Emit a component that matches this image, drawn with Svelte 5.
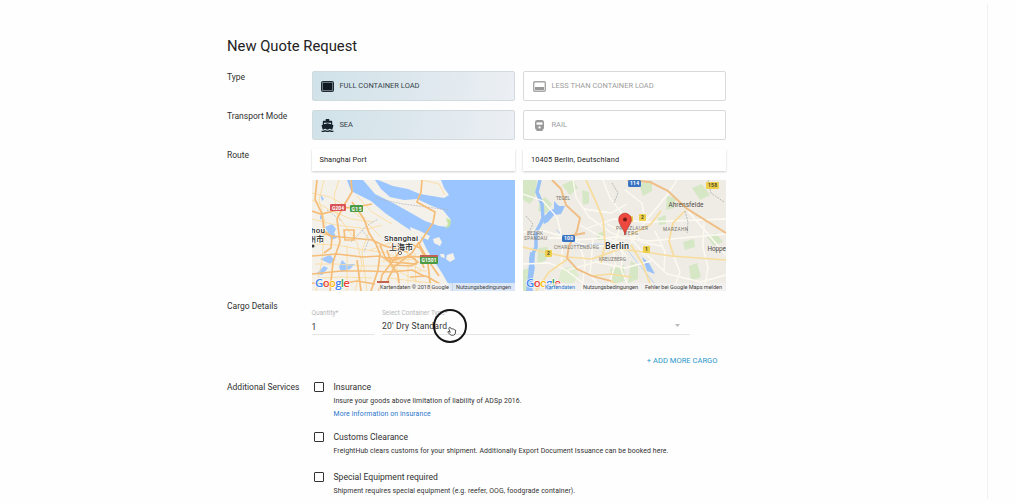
<script>
  const services = [
    { id: 'ins', title: 'Insurance', text: 'Insure your goods above limitation of liability of ADSp 2016.', link: 'More information on insurance' },
    { id: 'cus', title: 'Customs Clearance', text: 'FreightHub clears customs for your shipment. Additionally Export Document Issuance can be booked here.' },
    { id: 'spe', title: 'Special Equipment required', text: 'Shipment requires special equipment (e.g. reefer, OOG, foodgrade container).' }
  ];
  const google = [['G', '#4285f4'], ['o', '#ea4335'], ['o', '#fbbc05'], ['g', '#4285f4'], ['l', '#34a853'], ['e', '#ea4335']];

  const shMajor = [
    'M0 31L9 34L22 31L31 28L44 27L60 24',
    'M39 0L40 12L31 27L25 39L28 62L21 82L18 111',
    'M0 50L20 56L29 57L60 60L73 66L96 72',
    'M32 50H42V60H33Z',
    'M40 22L52 39L57 53L64 64L68 74L66 90L59 111',
    'M0 76L25 74L50 77L69 76L78 82L105 84',
    'M0 94L29 91L57 91L80 92L100 90L112 96',
    'M68 65L73 77L82 80L96 76L108 77L112 88',
    'M75 70L80 86L86 94L88 111',
    'M91 65L84 77L70 95L67 111',
    'M107 62L100 73L83 86L76 99L78 111',
    'M110 0L109 12L105 22L123 32L121 43L107 64L116 80L127 96',
    'M79 66L99 64L108 68L116 84L119 111',
    'M98 97L114 96L128 104',
    'M45 80L49 111', 'M0 103L20 105L45 101L63 104',
    'M11 50L20 57L19 68L12 73', 'M5 0L3 19L10 34L12 50', 'M74 78L100 77L106 82L99 86L80 85Z'
  ];
  const shMinor = [
    'M0 13L18 17L29 23L51 39L69 57', 'M12 0L7 20L13 42L10 80L4 111',
    'M27 0L22 16L26 36L45 62L50 85L43 111', 'M0 39L24 45L56 49L70 45',
    'M2 64L24 65L47 69L75 73L110 90', 'M3 84L24 84L51 86L77 86L110 104',
    'M35 65L35 111', 'M56 54L50 71L55 111', 'M96 66L96 111', 'M103 73L104 111',
    'M78 90L115 91', 'M77 98L126 104', 'M83 66L87 111', 'M70 81L104 79',
    'M90 69L99 77L112 76', 'M0 20L20 31L39 39L62 42', 'M45 16L60 32L80 44',
    'M110 0L127 4L133 15', 'M58 70L70 66L86 60', 'M8 98L30 97L60 98'
  ];
  const beMajor = [
    'M29 0L38 9L43 25L57 38L54 51L46 66L44 78L54 89L69 96L88 101L103 111',
    'M63 0L73 22L80 39L82 64L78 83',
    'M104 0L127 2L145 11L163 28L182 40L203 53',
    'M0 67L20 72L44 77L69 79L97 69L129 73L148 76L203 80',
    'M13 111L26 92L46 78', 'M69 96L87 94L108 97',
    'M108 65L119 83L130 111', 'M162 31L150 43L146 61L151 77',
    'M46 56L62 53', 'M107 55L127 45L138 31'
  ];
  const beMinor = [
    'M0 14L20 21L34 37L40 61L38 86', 'M0 52L21 51L53 60L94 57L126 61L203 54',
    'M50 0L53 17L66 37L87 52L102 59', 'M80 0L87 18L101 36L109 60L122 75',
    'M102 10L119 23L122 42L108 63', 'M154 0L144 15L126 37L108 60',
    'M25 58L40 58L66 66L93 65L104 77', 'M57 66L62 83L59 111', 'M70 60L67 95L81 111',
    'M90 62L92 85L84 111', 'M100 70L98 89L107 111', 'M45 90L73 82L102 88L128 81',
    'M65 48L91 39L121 42L203 39', 'M124 75L144 94L178 102L203 95',
    'M151 77L157 92L150 111', 'M181 43L180 67L185 88L181 111',
    'M132 51L142 72L141 91', 'M61 29L88 33L104 24', 'M165 31L184 53L203 75',
    'M0 84L26 83L43 90L60 103', 'M57 45L75 55L100 64', 'M84 44L96 50L90 68', 'M112 50L118 62L138 66'
  ];
</script>

<main>
  <section class="form">
    <h1>New Quote Request</h1>

    <div class="row choice-row">
      <span class="label">Type</span>
      <div class="pair">
        <button class="choice active">
          <svg width="13" height="11" viewBox="0 0 13 11"><rect x=".5" y=".5" width="12" height="10" rx="1" fill="#687780" stroke="#222b34"/><rect x="2" y="2" width="9" height="7" fill="#101820"/></svg>
          <span>FULL CONTAINER LOAD</span>
        </button>
        <button class="choice">
          <svg width="13" height="11" viewBox="0 0 13 11"><rect x=".7" y=".7" width="11.6" height="9.6" rx="1" fill="#fff" stroke="#a6a6a6" stroke-width="1.4"/><path d="M2 6H11V9H2Z" fill="#999"/></svg>
          <span>LESS THAN CONTAINER LOAD</span>
        </button>
      </div>
    </div>

    <div class="row choice-row">
      <span class="label">Transport Mode</span>
      <div class="pair">
        <button class="choice active">
          <svg width="13" height="13" viewBox="1 1 22 22" fill="#17212b"><path d="M20 21c-1.39 0-2.78-.47-4-1.32-2.44 1.71-5.56 1.71-8 0C6.78 20.53 5.39 21 4 21H2v2h2c1.38 0 2.74-.35 4-.99 2.52 1.29 5.48 1.29 8 0 1.26.65 2.62.99 4 .99h2v-2h-2zM3.95 19H4c1.6 0 3.02-.88 4-2 .98 1.12 2.4 2 4 2s3.02-.88 4-2c.98 1.12 2.4 2 4 2h.05l1.89-6.68c.08-.26.06-.54-.06-.78s-.34-.42-.6-.5L20 10.62V6c0-1.1-.9-2-2-2h-3V1H9v3H6c-1.1 0-2 .9-2 2v4.62l-1.29.42c-.26.08-.48.26-.6.5s-.15.52-.06.78L3.95 19zM6 7.5h12v2.47L12 8 6 9.97V7.5z"/></svg>
          <span>SEA</span>
        </button>
        <button class="choice">
          <svg width="13" height="13" viewBox="0 0 13 13"><path d="M2 3.2Q2 1 4.2 1H8.8Q11 1 11 3.2V8.8Q11 10.8 9.2 11L10 12H3L3.8 11Q2 10.8 2 8.8Z" fill="#999"/><path d="M3.5 3.4H9.5V5.7H3.5Z" fill="#fff"/><circle cx="6.5" cy="8.4" r="1.1" fill="#fff"/></svg>
          <span>RAIL</span>
        </button>
      </div>
    </div>

    <div class="row route-row">
      <span class="label">Route</span>
      <div class="pair">
        <div class="place">
          <div class="field">Shanghai Port</div>
          <svg class="map" width="203" height="111" viewBox="0 0 203 111">
            <rect width="203" height="111" fill="#9bc5ff"/>
            <path d="M0 0H35L39 11L59 21L73 33L89 44L98 50L109 57L114 68L120 78L130 93L138 107V111H0Z" fill="#f4f1eb"/>
            <path d="M51 0H63L69 9L78 17L92 20L105 19L120 26L131 30L139 40L136 47L127 46L113 41L99 33L83 24L63 14Z" fill="#f4f1eb"/>
            <path d="M66 0H129L132 8L137 15L132 18L120 16L108 14L96 9L81 6Z" fill="#f4f1eb"/>
            <path d="M98 47L108 51L118 56L116 60L107 56L99 52ZM121 59L127 57L130 62L128 66L122 63ZM135 75L141 73L143 79L138 82L134 79ZM128 74L132 74L133 78L129 77Z" fill="#f4f1eb"/>
            <path d="M134 38L139 40L138 46L133 49L136 44Z" fill="#c2e3a3"/>
            <path d="M13 47L20 44L24 49L22 53L25 58L19 60L17 54ZM8 14L12 19L10 21ZM8 79L18 75L23 80L18 84ZM30 80L34 84L43 84L38 89L29 92L27 87ZM12 86L16 88L10 95L4 94ZM8 35L11 37L8 40Z" fill="#a1c8ff"/>
            <g fill="none" stroke="#fadda2" stroke-width=".9">{#each shMinor as d}<path {d}/>{/each}</g>
            <path d="M39 62L46 55L53 47L66 39M63 18L91 24L137 30M50 50L57 59L52 72M15 30L30 41" fill="none" stroke="#adb5bd" stroke-width=".7" stroke-dasharray="2 1"/>
            <g fill="none" stroke="#f5bd78" stroke-width="1.7">{#each shMajor as d}<path {d}/>{/each}</g>
            <rect x="18" y="24" width="16" height="7" rx="1" fill="#d95356"/><rect x="38" y="25" width="13" height="7" rx="1" fill="#4e9b46"/>
            <rect x="108" y="76" width="18" height="8" rx="1" fill="#4e9b46"/><path d="M108 75H126V77H108ZM65 101H77V103H65Z" fill="#c36252"/>
            <g class="shield"><text x="20" y="29.5" textLength="12">G204</text><text x="39.5" y="30.5" textLength="10">G15</text><text x="109.5" y="82" textLength="15">G1501</text></g>
            <g class="city"><text x="-1" y="53" textLength="14">hou</text><text class="cjk" x="-4" y="62" textLength="16">州市</text><text x="72" y="61" textLength="34">Shanghai</text><text class="cjk" x="77" y="70" textLength="24">上海市</text></g>
            <circle cx="88" cy="73" r="1.6" fill="#fff" stroke="#333" stroke-width=".7"/><circle cx="1" cy="66" r="1.5" fill="#333"/>
            <path d="M67 103H203V111H67Z" fill="#f4f4f4" opacity=".72"/><path d="M140.5 103V111" stroke="#c2cad4" stroke-width=".6"/>
            <text class="google" x="3" y="107" textLength="35">{#each google as [c, fill]}<tspan {fill}>{c}</tspan>{/each}</text>
            <g class="attribution"><text x="68" y="108.8" textLength="69">Kartendaten © 2018 Google</text><text x="144" y="108.8" textLength="55">Nutzungsbedingungen</text></g>
          </svg>
        </div>
        <div class="place">
          <div class="field berlin">10405 Berlin, Deutschland</div>
          <svg class="map" width="203" height="111" viewBox="0 0 203 111">
            <rect width="203" height="111" fill="#eeece5"/>
            <path d="M0 0H14L12 17L7 24L0 20ZM17 20L22 17L29 24L24 33L15 31ZM39 5L50 0L55 8L47 15ZM59 10L66 12L66 23L60 25ZM74 54L81 51L82 60L74 60ZM87 89L101 85L102 101L90 104ZM15 68L25 67L23 80L14 85ZM0 90L10 87L9 111H0ZM116 4L129 0L129 11L120 16ZM144 16L153 18L151 28L143 30ZM135 38L143 35L143 44L136 45ZM169 8L179 4L187 15L177 20ZM184 57L193 53L200 62L191 66ZM160 62L171 59L172 67L162 70ZM108 81L115 85L115 99L105 103ZM166 86L174 83L178 97L168 101Z" fill="#d6e7c6"/>
            <path d="M39 88L51 87L56 95L48 106L35 101Z" fill="#e0eccf"/>
            <path d="M17 0L14 12L19 24L20 38L18 43L13 52L13 67L8 78L10 88L6 111" fill="none" stroke="#98c1f7" stroke-width="3.5"/>
            <path d="M19 39L27 30L31 29L31 21L36 26L42 26L38 34L31 35L25 42L21 44Z" fill="#98c1f7"/>
            <path d="M7 72L12 74L11 89L7 98L10 111H3L5 95Z" fill="#98c1f7"/>
            <path d="M33 50L44 58L59 66L73 64L87 65L104 69L113 81L124 94L137 111" fill="none" stroke="#b5d0f2" stroke-width=".9"/>
            <path d="M119 77L126 83L132 94L124 91Z" fill="#98c1f7"/>
            <g fill="none" stroke="#fff" stroke-width="1.3">{#each beMinor as d}<path {d}/>{/each}</g>
            <g fill="none" stroke="#faf1d8" stroke-width=".5">{#each beMinor as d}<path {d}/>{/each}</g>
            <g fill="none" stroke="#f8dc9c" stroke-width="1.7">{#each beMajor as d}<path {d}/>{/each}</g>
            <path d="M29 0L38 9L43 25L57 38L54 51L46 66L44 78L54 89L69 96L88 101M104 0L127 2L145 11L163 28L182 40L203 53M46 56L62 53" fill="none" stroke="#efbd88" stroke-width="1.8"/>
            <path d="M162 31L165 42L164 53M185 0L188 13L201 22M89 3L95 13L91 23M3 36L10 44L4 57" fill="none" stroke="#9da3a7" stroke-width=".7" stroke-dasharray="2 1"/>
            <rect x="105" y="0" width="13" height="7" rx="1.5" fill="#3974c2"/><rect x="39" y="55" width="13" height="7" rx="1.5" fill="#3974c2"/>
            <g fill="#ecd04c"><rect x="183" y="2" width="13" height="7" rx="1"/><rect x="22" y="70" width="7" height="7" rx="1"/><rect x="116" y="34" width="7" height="7" rx="1"/><rect x="120" y="66" width="7" height="7" rx="1"/><rect x="105" y="36" width="5" height="6" rx="1"/></g>
            <g class="shield"><text x="107" y="5.4" textLength="9">114</text><text x="41" y="60.4" textLength="9">100</text><g class="dark"><text x="185" y="7.4" textLength="9">158</text><text x="24" y="75.4">2</text><text x="118" y="39.4">2</text><text x="122" y="71.4">1</text></g></g>
            <g class="district"><text x="33" y="20" textLength="14">TEGEL</text><text x="4" y="55" textLength="16">BEZIRK</text><text x="1" y="60" textLength="23">SPANDAU</text><text x="31" y="69" textLength="45">CHARLOTTENBURG</text><text x="76" y="81" textLength="27">KREUZBERG</text><text x="93" y="50" textLength="32">PRENZLAUER</text><text x="101" y="55" textLength="14">BERG</text><text x="140" y="51" textLength="25">MARZAHN</text></g>
            <g class="town"><text x="145.5" y="26.5" textLength="35">Ahrensfelde</text><text x="184.5" y="71" textLength="18.5">Hoppe</text></g>
            <text class="berlin-name" x="82" y="68.5" textLength="24">Berlin</text>
            <path d="M102 55C101 48 95.7 45 95.7 39.5A6.3 6.3 0 0 1 108.3 39.5C108.3 45 103 48 102 55Z" fill="#ed493f" stroke="#b7312c" stroke-width=".7"/><circle cx="102" cy="39.5" r="2" fill="#711b18"/>
            <text class="google" x="3" y="107" textLength="35">{#each google as [c, fill]}<tspan {fill}>{c}</tspan>{/each}</text>
            <path d="M21 103H203V111H21Z" fill="#f4f4f4" opacity=".7"/>
            <g class="attribution"><text class="data" x="22" y="108.8" textLength="30">Kartendaten</text><text x="60" y="108.8" textLength="55">Nutzungsbedingungen</text><text x="122" y="108.8" textLength="77">Fehler bei Google Maps melden</text></g>
          </svg>
        </div>
      </div>
    </div>

    <div class="row cargo-row">
      <span class="label">Cargo Details</span>
      <div class="cargo-body">
        <div class="inputs">
          <label><small>Quantity*</small><span class="value one">1</span></label>
          <label><small>Select Container Type*</small><span class="value dry">20′ Dry Standard</span>
            <svg class="arrow" width="5" height="3" viewBox="0 0 5 3"><path d="M0 0H5L2.5 3Z" fill="#bbb"/></svg>
            <svg class="pointer" width="36" height="36" viewBox="0 0 36 36"><circle cx="18" cy="18" r="16" fill="none" stroke="#171717" stroke-width="2"/><path d="M17.2 19.6C18 18.8 18.8 19.7 19.3 21Q20.2 20.3 20.9 21.2Q21.8 20.7 22.4 21.7Q23.7 21.6 23.7 22.9L23.2 25.9L21.7 27.2H19L15.8 24.4Q15.7 23.1 17.2 23.7L18.3 24.3L16.9 21Q16.7 20.1 17.2 19.6Z" fill="#fff" stroke="#222" stroke-width=".8"/></svg>
          </label>
        </div>
        <button class="add">+ ADD MORE CARGO</button>
      </div>
    </div>

    <div class="row services-row">
      <span class="label">Additional Services</span>
      <div class="services">
        {#each services as s}
          <div class="service {s.id}">
            <span class="checkbox"></span>
            <div class="copy">
              <strong>{s.title}</strong>
              <p>{s.text}</p>
              {#if s.link}<span class="link">{s.link}</span>{/if}
            </div>
          </div>
        {/each}
      </div>
    </div>
  </section>
  <aside></aside>
</main>

<style>
  :global(body) { margin: 0; background: #fff; overflow: hidden; }
  * { box-sizing: border-box; }
  main { height: 503px; overflow: hidden; display: flex; justify-content: space-between; padding-left: 227px; background: #fefefe; font-family: Roboto, "Noto Sans CJK SC", sans-serif; color: #303030; }
  aside { width: 28px; height: 495px; margin-top: 4px; border-left: 1px solid #f0f0f0; }
  .form { width: 500px; padding-top: 34px; }
  h1 { margin: 0; height: 37px; line-height: 24px; font-size: 14.8px; font-weight: 400; color: #222; white-space: nowrap; }
  .row { display: grid; grid-template-columns: 84.5px 415px; }
  .label { height: 12px; line-height: 12px; font-size: 8.5px; white-space: nowrap; }
  .choice-row { height: 39px; }
  .pair { display: grid; grid-template-columns: 203px 203px; gap: 8.5px; align-items: start; }
  .choice { height: 30px; padding: 0 0 0 9px; display: flex; align-items: center; gap: 5.5px; border: 1px solid #d9d9dc; border-radius: 2px; background: #fff; color: #9d9d9d; font: 400 7.5px/12px Roboto, sans-serif; text-align: left; white-space: nowrap; }
  .choice.active { padding-left: 8.4px; color: #37434a; border-color: #d3dade; background: linear-gradient(105deg, #d0e2e9 0%, #dce7ed 47%, #eceff3 100%); }
  .field { height: 22px; margin-bottom: 9px; padding: 0 0 1px 8px; display: flex; align-items: center; background: #fff; box-shadow: 0 1px 2px #ccc; font-size: 7.4px; letter-spacing: .06px; color: #222; white-space: nowrap; }
  .berlin { letter-spacing: .1px; }
  .map { display: block; }
  .route-row { height: 150.6px; }
  .city text { font-size: 8px; font-weight: 500; fill: #292929; stroke: #fff; stroke-width: 1.2px; paint-order: stroke; }
  .city .cjk { font-family: "Noto Sans CJK SC", sans-serif; }
  .shield { font-size: 5px; font-weight: 700; fill: #fff; }
  .dark { fill: #4c4720; }
  .district { font-size: 4.7px; fill: #77736c; }
  .town { font-size: 6.4px; fill: #4f4b46; }
  .berlin-name { font-size: 9px; font-weight: 500; fill: #292929; stroke: #fff; stroke-width: 1px; paint-order: stroke; }
  .google { font: 600 11.5px "Open Sans", sans-serif; stroke: #fff; stroke-width: 1.2px; paint-order: stroke; }
  .attribution { font-size: 5.6px; fill: #444; }
  .data { fill: #2878cc; }
  .cargo-row { height: 81.4px; }
  .cargo-body { padding-top: 8px; display: flex; flex-direction: column; }
  .inputs { display: grid; grid-template-columns: 62px 308px; gap: 8.5px; }
  .inputs label { height: 27px; border-bottom: 1px solid #e4e4e4; display: flex; flex-direction: column; position: relative; white-space: nowrap; }
  small { height: 11px; font-size: 6.5px; line-height: 11px; color: #b8b8b8; }
  .value { font-size: 8.5px; line-height: 14px; color: #333; }
  .one { padding-top: 1px; }
  .dry { letter-spacing: .2px; }
  .arrow { position: absolute; right: 10px; top: 16px; }
  .pointer { position: absolute; left: 50px; top: 0; }
  .add { align-self: flex-end; margin: 19.6px 9px 0 0; padding: 0; border: 0; background: none; color: #2d97ca; font: 400 7.6px/14px Roboto, sans-serif; white-space: nowrap; }
  .services { padding-left: 2px; }
  .service { display: grid; grid-template-columns: 20px 1fr; height: 50px; }
  .cus { height: 40.4px; }
  .checkbox { width: 10px; height: 10px; margin-top: 1px; border: 1.5px solid #333; border-radius: 1px; }
  strong { display: block; height: 12px; line-height: 12px; font-size: 8.6px; font-weight: 400; }
  .copy { white-space: nowrap; }
  p { margin: 1px 0 0; height: 14px; font-size: 6.9px; letter-spacing: .095px; line-height: 14px; }
  .link { display: block; height: 13px; line-height: 13px; font-size: 6.9px; letter-spacing: .11px; color: #2977cb; }
</style>
